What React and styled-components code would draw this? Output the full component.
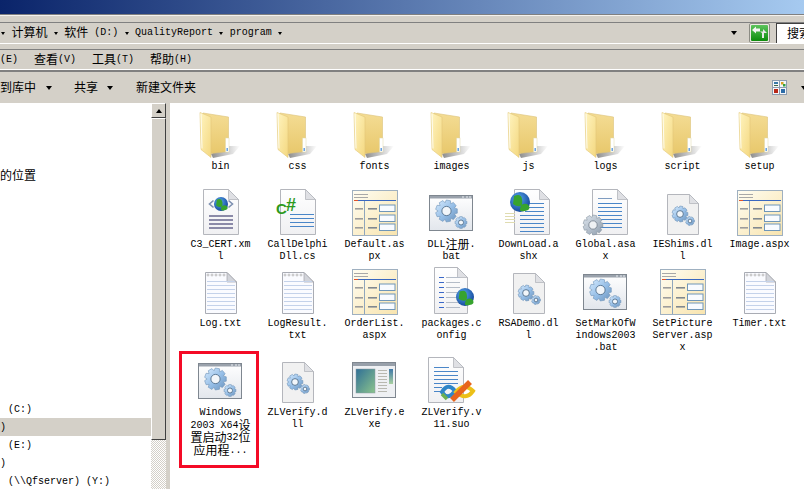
import React from "react";
import styled, { createGlobalStyle } from "styled-components";

const face = "#d4d0c8";
const mono = `"Liberation Mono", "Noto Sans CJK SC", monospace`;

const Global = createGlobalStyle`
  html, body {
    margin: 0;
    padding: 0;
    background: #fff;
    overflow: hidden;
  }
`;

const Page = styled.div`
  width: 804px;
  height: 489px;
  overflow: hidden;
  display: flex;
  flex-direction: column;
  background: ${face};
  font-family: ${mono};
  font-size: 10px;
  line-height: 12px;
  color: #000;
`;

const TitleBar = styled.div`
  height: 14px;
  flex: none;
  background: linear-gradient(90deg, #0a246a, #a6caf0);
  border-bottom: 1px solid #808080;
`;

const Band = styled.div`
  flex: none;
  height: 6px;
  border-top: 1px solid #f4f2ee;
`;

const AddressBar = styled.div`
  flex: none;
  height: 20px;
  display: flex;
  align-items: center;
  gap: 6.4px;
  padding-left: 1px;
  border-top: 1px solid #808080;
  border-bottom: 1px solid #fff;
`;

const Gap = styled.div`
  flex: none;
  height: 5px;
`;

const MenuBar = styled.div`
  flex: none;
  height: 19px;
  display: flex;
  align-items: center;
  gap: 16px;
  border-top: 1px solid #808080;
  border-bottom: 1px solid #fff;
`;

const ToolBar = styled.div`
  flex: none;
  height: 31px;
  display: flex;
  align-items: center;
  border-top: 2px solid #808080;
`;

const ToolText = styled.span`
  flex: none;
  display: inline-flex;
  align-items: center;
  white-space: pre;
`;

const Caret = styled.i`
  display: block;
  flex: none;
  width: 0;
  height: 0;
  border-style: solid;
  border-color: #000 transparent transparent;
  border-width: ${(p) => (p.$big ? "4px 3.5px 0" : "3px 2.5px 0")};
  margin-left: ${(p) => (p.$push ? "auto" : `${p.$left || 0}px`)};
  margin-right: ${(p) => p.$right || 0}px;
`;

const GoButton = styled.div`
  flex: none;
  width: 21px;
  height: 20px;
  margin-left: 5px;
`;

const SearchBox = styled.div`
  flex: none;
  width: 28px;
  height: 20px;
  box-sizing: border-box;
  background: #fff;
  border-top: 1px solid #404040;
  border-left: 1px solid #404040;
  padding: 3px 0 0 10px;
  white-space: nowrap;
  overflow: hidden;
`;

const ViewIcon = styled.div`
  flex: none;
  width: 15px;
  height: 15px;
  margin-left: auto;
`;

const Body = styled.div`
  flex: 1;
  min-height: 0;
  display: flex;
`;

const Sidebar = styled.div`
  flex: none;
  width: 151px;
  background: #fff;
  display: flex;
  flex-direction: column;
  justify-content: space-between;
  margin-bottom: -1px;
`;

const SideNote = styled.div`
  margin-top: 66px;
  height: 18px;
  line-height: 18px;
  white-space: pre;
`;

const SideRow = styled.div`
  height: 18px;
  line-height: 20px;
  padding-left: ${(p) => (p.$flush ? 0 : 8)}px;
  background: ${(p) => (p.$active ? face : "#fff")};
  white-space: pre;
`;

const ScrollBar = styled.div`
  flex: none;
  width: 15px;
  display: flex;
  flex-direction: column;
`;

const ScrollButton = styled.div`
  flex: none;
  height: 15px;
  box-sizing: border-box;
  display: flex;
  align-items: center;
  justify-content: center;
  background: ${face};
  border-top: 1px solid #fff;
  border-left: 1px solid #fff;
  border-right: 1px solid #404040;
  border-bottom: 1px solid #404040;
`;

const UpArrow = styled.i`
  display: block;
  width: 0;
  height: 0;
  border-style: solid;
  border-color: transparent transparent #000;
  border-width: 0 3.5px 4px;
`;

const ScrollThumb = styled(ScrollButton)`
  height: 322px;
`;

const ScrollTrack = styled.div`
  flex: 1;
  background: repeating-conic-gradient(${face} 0 25%, #fff 0 50%) 0 0 / 2px 2px;
`;

const Splitter = styled.div`
  flex: none;
  width: 4px;
  background: ${face};
`;

const Files = styled.div`
  flex: 1;
  min-width: 0;
  background: #fff;
  padding: 7px 0 0 12px;
  display: grid;
  grid-template-columns: repeat(8, 77px);
  grid-template-rows: 78px 79px 89px auto;
`;

const Item = styled.div`
  position: relative;
  display: flex;
  flex-direction: column;
  align-items: center;

  ${(p) =>
    p.$marked &&
    `&::after {
      content: "";
      position: absolute;
      left: -3px;
      top: -5px;
      width: 80px;
      height: 117px;
      box-sizing: border-box;
      border: 3px solid #f40a26;
    }`}
`;

const IconSlot = styled.svg`
  display: block;
  flex: none;
  width: 48px;
  height: 48px;
  margin-bottom: 3px;
`;

const Label = styled.div`
  white-space: pre;
`;

const Line = styled.div`
  height: ${(p) => (p.$tall ? 12.5 : 12)}px;
  display: flex;
  align-items: center;
  justify-content: center;
`;

// the CJK face sits lower than the latin one, lift it so the baselines agree
const Cjk = styled.span`
  flex: none;
  font-family: "Noto Sans CJK SC", sans-serif;
  font-size: 12px;
  line-height: 12px;
  margin-top: -2px;
`;

const Defs = styled.svg`
  display: block;
  width: 0;
  height: 0;
`;

// latin is 6px wide, han 12px, the way SimSun draws at 9pt
const T = ({ children }) =>
  children
    .split(/([\u4e00-\u9fff]+)/)
    .map((part, i) => (i % 2 ? <Cjk key={i}>{part}</Cjk> : part));

const gearPath = (cx, cy, r, teeth) => {
  const pts = [];
  const step = (Math.PI * 2) / teeth;
  for (let i = 0; i < teeth; i++) {
    const a = i * step;
    [
      [-0.5, 0.76],
      [-0.28, 1],
      [0.28, 1],
      [0.5, 0.76],
    ].forEach(([o, k]) => {
      const t = a + o * step;
      pts.push(`${(cx + Math.cos(t) * r * k).toFixed(2)},${(cy + Math.sin(t) * r * k).toFixed(2)}`);
    });
  }
  return `M${pts.join("L")}Z`;
};

const Gear = ({ x, y, r, teeth = 9, dull }) => (
  <g>
    <path d={gearPath(x, y, r, teeth)} fill={dull ? "url(#gearGrey)" : "url(#gearBlue)"} stroke={dull ? "#8793a0" : "#6f93b8"} strokeWidth=".6" />
    <circle cx={x} cy={y} r={r * 0.42} fill={dull ? "#eef1f4" : "#f2f6fa"} stroke={dull ? "#7c8794" : "#54708c"} strokeWidth=".9" />
  </g>
);

const Globe = ({ x, y, r }) => (
  <g>
    <circle cx={x} cy={y} r={r} fill="url(#globe)" />
    <path
      d={`M${x - r * 0.6},${y - r * 0.6}q${r * 0.7},${-r * 0.3} ${r * 0.8},${r * 0.3}t${-r * 0.2},${r * 0.7}t${-r * 0.7},${-r * 0.2}zM${x + r * 0.1},${y + r * 0.3}q${r * 0.6},${-r * 0.3} ${r * 0.8},${r * 0.1}t${-r * 0.4},${r * 0.5}t${-r * 0.5},${-r * 0.2}z`}
      fill="#37a32e"
    />
  </g>
);

const Sheet = ({ x, y, w, h, fold = 10, fill = "url(#paper)" }) => (
  <g>
    <path d={`M${x},${y}H${x + w - fold}L${x + w},${y + fold}V${y + h}H${x}Z`} fill={fill} stroke="#b4b6bc" strokeWidth="1" />
    <path d={`M${x + w - fold},${y}V${y + fold}H${x + w}Z`} fill="#dfe0e4" stroke="#b4b6bc" strokeWidth=".8" />
  </g>
);

const Rules = ({ x, w, ys, color = "#4a86c8", h = 1 }) =>
  ys.map((y) => <rect key={y} x={x} y={y} width={w} height={h} fill={color} />);

const FormWindow = () => (
  <g>
    <rect x="1.5" y="2.5" width="45" height="45" fill="url(#cream)" stroke="#9fb0c0" />
    <Rules x={3} w={14} ys={[6, 9]} color="#a8a8a8" />
    <rect x="3" y="12" width="4" height="1" fill="#e0522a" />
    <rect x="7" y="12" width="38" height="1" fill="#3a68c0" />
    <rect x="13" y="13" width="1" height="34" fill="#8fa6bc" />
    {[20, 30, 39].map((y) => (
      <g key={y}>
        <rect x="4" y={y} width="8" height="1.6" fill="#9c9c9c" />
        <rect x="17" y={y} width="9" height="1.6" fill="#808890" />
        <rect x="28.5" y={y - 3} width="15.5" height="6.5" fill="#f8fbff" stroke="#6f96b8" />
      </g>
    ))}
  </g>
);

const icons = {
  folder: () => (
    <g>
      <path d="M14,44 L31,36 L43,36 L36,44 L16,48Z" fill="url(#shade)" />
      <path d="M6,3 L31.5,7 V41.5 L14,43.5Z" fill="url(#folderBack)" stroke="#dcc27a" strokeWidth=".6" />
      <rect x="28.5" y="28" width="3.5" height="14" fill="#fff" stroke="#e0d8a8" strokeWidth=".5" />
      <rect x="29.5" y="38" width="1.4" height="3" fill="#5a9ae0" />
      <path d="M3,2.5 L14,7 V47.5 L4,39.5Z" fill="url(#folderDoor)" stroke="#e2c878" strokeWidth=".6" />
      <path d="M4,3.5 L5,38.5" stroke="#fffdf0" strokeWidth="1" />
    </g>
  ),
  xml: () => (
    <g>
      <Sheet x={6.5} y={1.5} w={35} h={45} />
      <Globe x={24} y={16} r={7} />
      <path d="M16.5,12.5 L12.5,16 L16.5,19.5M31.5,12.5 L35.5,16 L31.5,19.5" fill="none" stroke="#7d8fb0" strokeWidth="1.6" />
      <Rules x={12} w={24} ys={[27, 31, 35, 39]} color="#8b8aa8" h={2} />
    </g>
  ),
  cs: () => (
    <g>
      <Sheet x={6.5} y={1.5} w={35} h={45} />
      <text x="2" y="26" fontFamily="Liberation Sans, sans-serif" fontWeight="700" fontSize="15" fill="#2f9a1c">
        C
      </text>
      <text x="12" y="23" fontFamily="Liberation Sans, sans-serif" fontWeight="700" fontSize="18" fill="#2f9a1c">
        #
      </text>
      <Rules x={16} w={24} ys={[26, 30, 34, 38]} />
    </g>
  ),
  aspx: () => <FormWindow />,
  bat: () => (
    <g>
      <rect x="1.5" y="7.5" width="43" height="35" fill="url(#pane)" stroke="#7f8790" />
      <rect x="2" y="8" width="42" height="2.5" fill="#9aa2ac" />
      <rect x="34" y="8.5" width="2" height="1" fill="#e8ecf0" />
      <rect x="38" y="8.5" width="2" height="1" fill="#e8ecf0" />
      <rect x="41" y="8.5" width="2" height="1" fill="#e8ecf0" />
      <Gear x={18.5} y={23} r={11} />
      <Gear x={33} y={34.5} r={6} teeth={8} />
    </g>
  ),
  dll: () => (
    <g>
      <Sheet x={8.5} y={6.5} w={31} h={40} fold={9} fill="#f1f1f1" />
      <Gear x={21} y={26} r={8} />
      <Gear x={31} y={33} r={4.5} teeth={7} />
    </g>
  ),
  txt: () => (
    <g>
      <path d="M8.5,5.5H30L39.5,15V46.5H8.5Z" fill="#fafbff" stroke="#a9acb4" />
      <path d="M30,5.5V15H39.5Z" fill="#d2d4da" stroke="#a0a2a8" strokeWidth=".7" />
      <Rules x={10} w={28} ys={[14, 18, 22, 26, 30, 34, 38, 42]} color="#c4d2ea" />
      {[11, 15, 19, 23, 27].map((x) => (
        <circle key={x} cx={x} cy="8" r="1" fill="#fff" stroke="#9a9a9a" strokeWidth=".6" />
      ))}
    </g>
  ),
  ashx: () => (
    <g>
      <Sheet x={9.5} y={1.5} w={35} h={45} />
      <Rules x={20} w={19} ys={[15, 19, 23]} />
      <Rules x={15} w={24} ys={[27, 31, 35, 39, 43]} />
      <Rules x={0} w={10} ys={[25, 28, 31, 34]} color="#e0dcb0" />
      <Globe x={15} y={14} r={10} />
    </g>
  ),
  asax: () => (
    <g>
      <Sheet x={10.5} y={1.5} w={35} h={45} />
      <rect x="16" y="10" width="14" height="1" fill="#7f9cc0" />
      <Rules x={16} w={24} ys={[15, 19, 23, 27, 31, 35, 39]} />
      <Gear x={11} y={37} r={10} dull />
    </g>
  ),
  config: () => (
    <g>
      <Sheet x={6.5} y={.5} w={33} h={46} />
      <Rules x={11} w={5} ys={[10, 15, 20, 25, 30, 35, 40]} color="#3a68c8" />
      <Rules x={18} w={14} ys={[10, 15, 20, 25, 30, 35, 40]} color="#b4bcc8" />
      <Globe x={37} y={30} r={9} />
    </g>
  ),
  exe: () => (
    <g>
      <rect x="1.5" y="6.5" width="43" height="35" fill="#eef0f3" stroke="#7f8790" />
      <rect x="2" y="7" width="42" height="3" fill="#98a0aa" />
      <rect x="5" y="13" width="19" height="24" fill="url(#exePane)" stroke="#8a98a4" strokeWidth=".5" />
      <Rules x={27} w={9} ys={[14, 17, 20, 23, 26, 29, 32, 35]} color="#b8b8b0" />
      <rect x="38" y="13" width="4" height="15" fill="url(#exeBar)" />
    </g>
  ),
  suo: () => (
    <g>
      <Sheet x={.5} y={1.5} w={35} h={45} />
      <Rules x={6} w={15} ys={[11]} />
      <Rules x={6} w={24} ys={[15, 19, 23, 27]} />
      <Rules x={6} w={8} ys={[31, 35]} />
      <path d="M14,36 Q20,26 27,35 Q20,45 14,36Z" fill="none" stroke="#2f86c8" strokeWidth="4" />
      <path d="M28,36 Q36,26 45,35 Q38,45 28,36Z" fill="none" stroke="#ecc018" strokeWidth="4" />
      <path d="M14,38 L19,43" stroke="#6cb050" strokeWidth="3.5" />
      <path d="M24,44 L42,26" stroke="#e8641c" strokeWidth="5.5" />
    </g>
  ),
};

const files = [
  ["folder", "bin"],
  ["folder", "css"],
  ["folder", "fonts"],
  ["folder", "images"],
  ["folder", "js"],
  ["folder", "logs"],
  ["folder", "script"],
  ["folder", "setup"],
  ["xml", "C3_CERT.xm", "l"],
  ["cs", "CallDelphi", "Dll.cs"],
  ["aspx", "Default.as", "px"],
  ["bat", "DLL注册.", "bat"],
  ["ashx", "DownLoad.a", "shx"],
  ["asax", "Global.asa", "x"],
  ["dll", "IEShims.dl", "l"],
  ["aspx", "Image.aspx"],
  ["txt", "Log.txt"],
  ["txt", "LogResult.", "txt"],
  ["aspx", "OrderList.", "aspx"],
  ["config", "packages.c", "onfig"],
  ["dll", "RSADemo.dl", "l"],
  ["bat", "SetMarkOfW", "indows2003", ".bat"],
  ["aspx", "SetPicture", "Server.asp", "x"],
  ["txt", "Timer.txt"],
  ["bat", "Windows", "2003 X64设", "置启动32位", "应用程..."],
  ["dll", "ZLVerify.d", "ll"],
  ["exe", "ZLVerify.e", "xe"],
  ["suo", "ZLVerify.v", "11.suo"],
];

const SharedDefs = () => (
  <Defs aria-hidden="true">
    <defs>
      <linearGradient id="paper" x1="0" y1="0" x2="0" y2="1">
        <stop offset="0" stopColor="#fff" />
        <stop offset="1" stopColor="#f0f0f2" />
      </linearGradient>
      <linearGradient id="cream" x1="0" y1="0" x2="1" y2="1">
        <stop offset="0" stopColor="#fffdf2" />
        <stop offset="1" stopColor="#f8e4ae" />
      </linearGradient>
      <linearGradient id="pane" x1="0" y1="0" x2="0" y2="1">
        <stop offset="0" stopColor="#fff" />
        <stop offset="1" stopColor="#e2e6ec" />
      </linearGradient>
      <linearGradient id="gearBlue" x1="0" y1="0" x2="1" y2="1">
        <stop offset="0" stopColor="#d8ecff" />
        <stop offset=".55" stopColor="#94bde6" />
        <stop offset="1" stopColor="#6c93bc" />
      </linearGradient>
      <linearGradient id="gearGrey" x1="0" y1="0" x2="1" y2="1">
        <stop offset="0" stopColor="#dfe6ee" />
        <stop offset="1" stopColor="#8d9cac" />
      </linearGradient>
      <radialGradient id="globe" cx=".4" cy=".35" r=".75">
        <stop offset="0" stopColor="#58a8f0" />
        <stop offset="1" stopColor="#0c3c90" />
      </radialGradient>
      <linearGradient id="folderBack" x1="0" y1="0" x2="0" y2="1">
        <stop offset="0" stopColor="#f4dc94" />
        <stop offset="1" stopColor="#e8c86c" />
      </linearGradient>
      <linearGradient id="folderDoor" x1="0" y1="0" x2="1" y2="1">
        <stop offset="0" stopColor="#fff4c0" />
        <stop offset="1" stopColor="#f4d880" />
      </linearGradient>
      <linearGradient id="shade" x1="0" y1="0" x2="1" y2="0">
        <stop offset="0" stopColor="#8c8c8c" />
        <stop offset="1" stopColor="#fff" />
      </linearGradient>
      <linearGradient id="exePane" x1="0" y1="0" x2="1" y2="1">
        <stop offset="0" stopColor="#2f6f96" />
        <stop offset="1" stopColor="#8cc48c" />
      </linearGradient>
      <linearGradient id="exeBar" x1="0" y1="0" x2="0" y2="1">
        <stop offset="0" stopColor="#3f78a8" />
        <stop offset="1" stopColor="#a8d0a0" />
      </linearGradient>
      <linearGradient id="goGreen" x1="0" y1="0" x2="0" y2="1">
        <stop offset="0" stopColor="#5cc45c" />
        <stop offset="1" stopColor="#0c8c0c" />
      </linearGradient>
    </defs>
  </Defs>
);

const App = () => (
  <Page>
    <Global />
    <SharedDefs />
    <TitleBar />
    <Band />
    <AddressBar>
      <Caret />
      <Cjk>计算机</Cjk>
      <Caret />
      <ToolText>
        <Cjk>软件</Cjk> (D:)
      </ToolText>
      <Caret />
      <ToolText>QualityReport</ToolText>
      <Caret />
      <ToolText>program</ToolText>
      <Caret />
      <Caret $big $push />
      <GoButton>
        <svg width="21" height="20" viewBox="0 0 21 20">
          <rect x=".5" y=".5" width="20" height="19" rx="1.5" fill="#eceae4" stroke="#8c8c84" />
          <rect x="2" y="2" width="17" height="16" rx="1" fill="url(#goGreen)" />
          <path d="M3,7 L7,3.5 V5.5 H11 V8.5 H7 V10.5Z" fill="#f4f4f4" />
          <path d="M18,10 L14,6 V8.5 H11 L13,10 V15 H15 V10Z" fill="#e8e8e8" />
        </svg>
      </GoButton>
      <SearchBox>
        <Cjk>搜索</Cjk>
      </SearchBox>
    </AddressBar>
    <Gap />
    <MenuBar>
      <ToolText>(E)</ToolText>
      <ToolText>
        <Cjk>查看</Cjk>(V)
      </ToolText>
      <ToolText>
        <Cjk>工具</Cjk>(T)
      </ToolText>
      <ToolText>
        <Cjk>帮助</Cjk>(H)
      </ToolText>
    </MenuBar>
    <ToolBar>
      <Cjk>到库中</Cjk>
      <Caret $big $left={10} $right={22} />
      <Cjk>共享</Cjk>
      <Caret $big $left={9} $right={23} />
      <Cjk>新建文件夹</Cjk>
      <ViewIcon>
        <svg width="15" height="15" viewBox="0 0 15 15">
          <rect x=".5" y=".5" width="14" height="14" fill="#f4f6fa" stroke="#8c9cb0" />
          <path d="M7.5,0V15M0,7.5H15" stroke="#8c9cb0" />
          <rect x="2" y="2" width="4" height="2" fill="#3878a8" />
          <rect x="2" y="5" width="4" height="1" fill="#406848" />
          <rect x="9" y="2" width="2.5" height="2.5" fill="#d8a020" />
          <rect x="11" y="4" width="2.5" height="2.5" fill="#30a040" />
          <rect x="2" y="9" width="4" height="4" fill="#b82818" />
          <rect x="9" y="9" width="4" height="4" fill="#2c6ca8" />
        </svg>
      </ViewIcon>
      <Caret $big $left={14} $right={-3} />
    </ToolBar>
    <Body>
      <Sidebar>
        <SideNote>
          <Cjk>的位置</Cjk>
        </SideNote>
        <div>
          <SideRow>(C:)</SideRow>
          <SideRow $active $flush>
            )
          </SideRow>
          <SideRow>(E:)</SideRow>
          <SideRow $flush>)</SideRow>
          <SideRow>(\\Qfserver) (Y:)</SideRow>
        </div>
      </Sidebar>
      <ScrollBar>
        <ScrollButton>
          <UpArrow />
        </ScrollButton>
        <ScrollThumb />
        <ScrollTrack />
      </ScrollBar>
      <Splitter />
      <Files>
        {files.map(([icon, ...lines], i) => {
          const Icon = icons[icon];
          const marked = lines[0] === "Windows";
          return (
            <Item key={i} $marked={marked}>
              <IconSlot viewBox="0 0 48 48">
                <Icon />
              </IconSlot>
              <Label>
                {lines.map((line, n) => (
                  <Line key={n} $tall={marked}>
                    <T>{line}</T>
                  </Line>
                ))}
              </Label>
            </Item>
          );
        })}
      </Files>
    </Body>
  </Page>
);

export default App;
